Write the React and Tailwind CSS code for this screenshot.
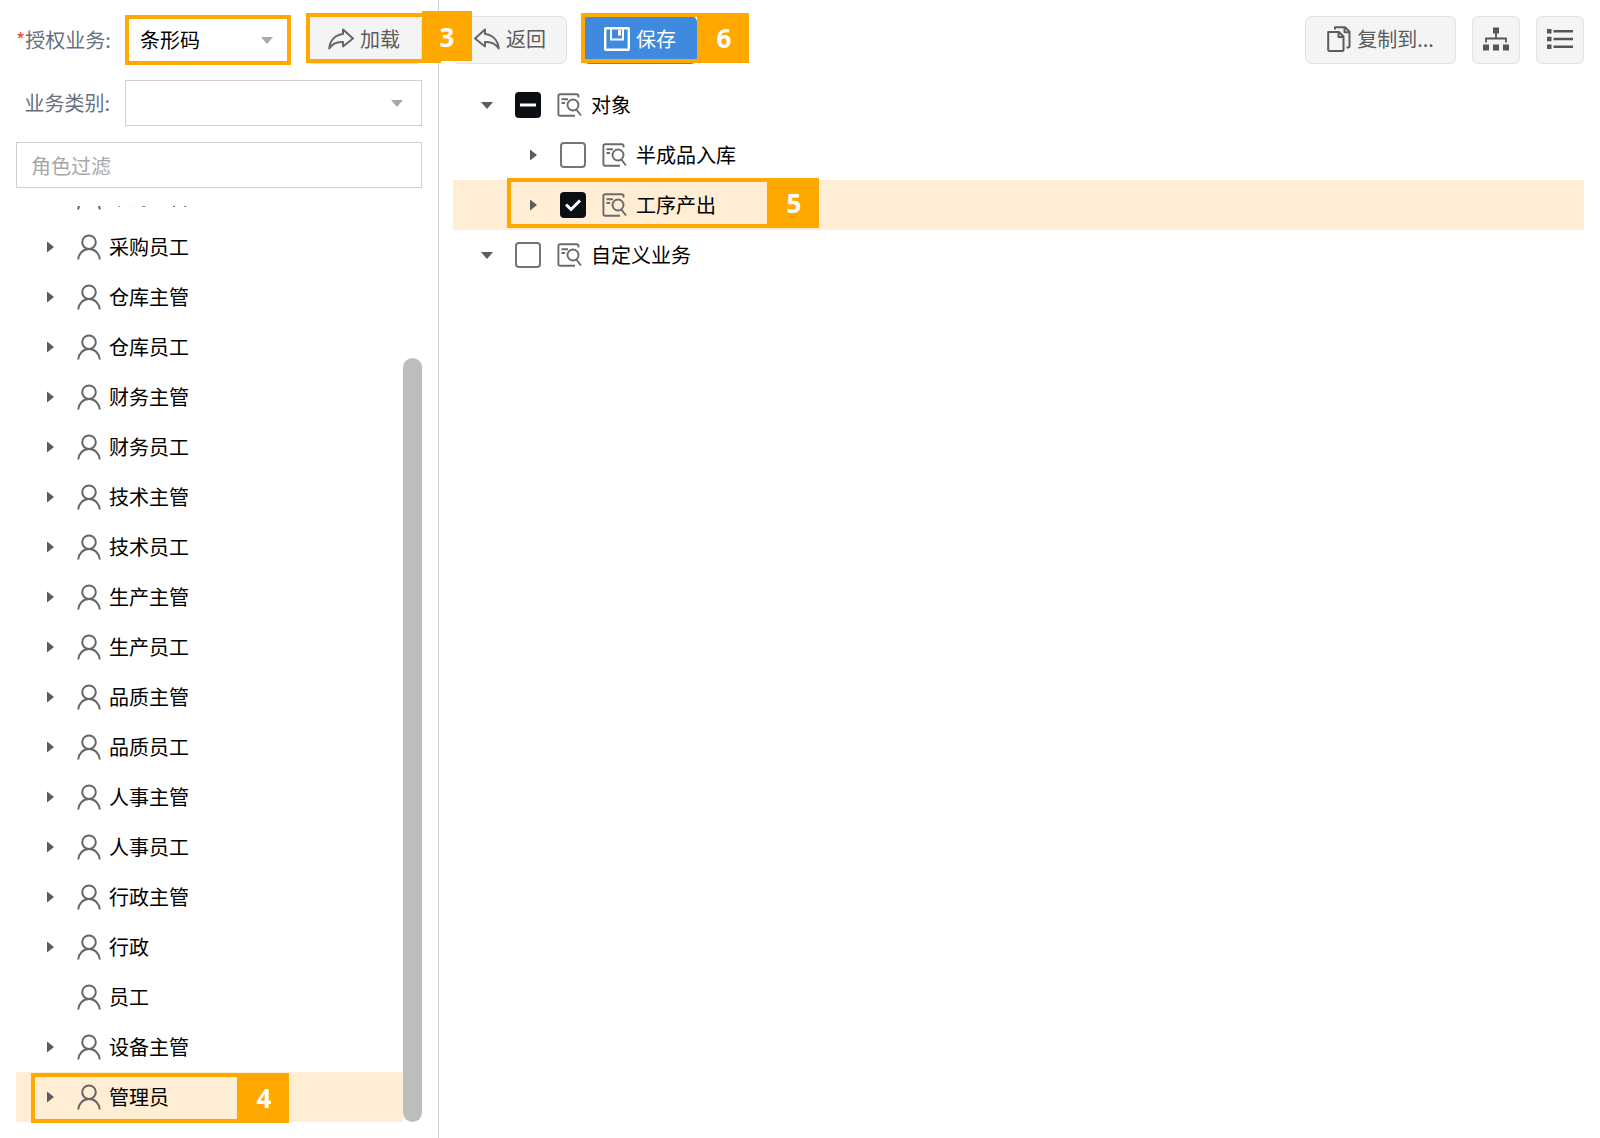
import React, { useEffect, useRef, useState } from "react";

const roles = [
  { name: "采购主管", hasChildren: true },
  { name: "采购员工", hasChildren: true },
  { name: "仓库主管", hasChildren: true },
  { name: "仓库员工", hasChildren: true },
  { name: "财务主管", hasChildren: true },
  { name: "财务员工", hasChildren: true },
  { name: "技术主管", hasChildren: true },
  { name: "技术员工", hasChildren: true },
  { name: "生产主管", hasChildren: true },
  { name: "生产员工", hasChildren: true },
  { name: "品质主管", hasChildren: true },
  { name: "品质员工", hasChildren: true },
  { name: "人事主管", hasChildren: true },
  { name: "人事员工", hasChildren: true },
  { name: "行政主管", hasChildren: true },
  { name: "行政", hasChildren: true },
  { name: "员工", hasChildren: false },
  { name: "设备主管", hasChildren: true },
  { name: "管理员", hasChildren: true },
];

const objects = [
  { name: "对象", level: 0, open: true, state: "mixed" },
  { name: "半成品入库", level: 1, open: false, state: "off" },
  { name: "工序产出", level: 1, open: false, state: "on", step: "5" },
  { name: "自定义业务", level: 0, open: true, state: "off" },
];

const ArrowRight = () => (
  <svg width="7" height="12" viewBox="0 0 7 12" fill="#5c5c5c">
    <path d="M0 0.5 7 6 0 11.5z" />
  </svg>
);

const ArrowDown = ({ className = "text-[#5c5c5c]" }) => (
  <svg className={className} width="12" height="7" viewBox="0 0 12 7" fill="currentColor">
    <path d="M0 0h12L6 7z" />
  </svg>
);

const UserIcon = () => (
  <svg width="24" height="26" viewBox="0 0 24 26" fill="none" stroke="#666" strokeWidth="2">
    <circle cx="12" cy="8.2" r="6.8" />
    <path d="M1.200 25.500C1.800 19.500 6 15 12 15s10.200 4.500 10.800 10.500" />
  </svg>
);

const ObjectIcon = () => (
  <svg width="25" height="24" viewBox="0 0 25 24" fill="none" stroke="#6b6b6b" strokeWidth="1.9">
    <path d="M21.500 4.500V3Q21.500 1.200 19.700 1.200H3.200Q1.400 1.200 1.400 3v18q0 1.800 1.800 1.800H18" />
    <path d="M4.500 6.200h6.500M4.500 10h3.500" />
    <circle cx="16" cy="12" r="5.500" />
    <path d="M19.300 16.500l4.700 6" />
  </svg>
);

const ForwardIcon = () => (
  <svg width="26" height="22" viewBox="0 0 26 22" fill="none" stroke="#666" strokeWidth="2" strokeLinejoin="round">
    <path d="M15 1.500 25 10.500 15 18.500v-4.500C9 13.500 4.500 15.500 1.200 20.500 2 12.500 7 7 15 6z" />
  </svg>
);

const BackIcon = () => (
  <svg width="26" height="22" viewBox="0 0 26 22" fill="none" stroke="#666" strokeWidth="2" strokeLinejoin="round">
    <path d="M11 1.500 1 10.500 11 18.500v-4.500c6-.5 10.500 1.500 13.800 6.500C24 12.500 19 7 11 6z" />
  </svg>
);

const SaveIcon = () => (
  <svg width="26" height="24" viewBox="0 0 26 24" fill="none" stroke="#fff" strokeWidth="2.4">
    <rect x="1.200" y="1.200" width="23.600" height="21.600" rx="0.500" />
    <path d="M7 1.200v11.300h12V1.200" strokeWidth="2" />
    <path d="M15.500 3v5.500" strokeWidth="3" />
  </svg>
);

const CopyIcon = () => (
  <svg width="24" height="26" viewBox="0 0 24 26" fill="none" stroke="#5c5c5c" strokeWidth="2" strokeLinejoin="round">
    <path d="M1.200 6h10.800L16.500 10.500V23.500Q16.500 25 15 25h-12.300Q1.200 25 1.200 23.500z" />
    <path d="M11.500 6v5h5" />
    <path d="M8 3.500V1.200h10l4.500 4.500V20q0 1.500-1.500 1.500h-1.500" />
    <path d="M17.500 1.200v5h5" />
  </svg>
);

const SitemapIcon = () => (
  <svg width="26" height="24" viewBox="0 0 26 24" fill="#555">
    <path d="M10 0.500h6v6h-6zM0 17.500h6v6H0zM10 17.500h6v6h-6zM20 17.500h6v6h-6z" />
    <path d="M13 6v5M3 15.500V11.500h20v4" fill="none" stroke="#555" strokeWidth="1.800" />
  </svg>
);

const ListIcon = () => (
  <svg width="26" height="20" viewBox="0 0 26 20" fill="#555">
    <path d="M0 0h4.500v4.500H0zM0 7.700h4.500v4.500H0zM0 15.500h4.500V20H0z" />
    <path d="M6.500 2.300H26M6.500 10H26M6.500 17.700H26" stroke="#555" strokeWidth="2.400" />
  </svg>
);

const Badge = ({ children, className = "" }) => (
  <span
    className={`flex items-center justify-center bg-[#ffa800] font-['Open_Sans',sans-serif] text-[26px] font-bold text-white ${className}`}
  >
    {children}
  </span>
);

// Orange frame laid over a control, with an optional step number at its right end
const Callout = ({ step, className }) => (
  <div className={`pointer-events-none absolute z-20 flex justify-end border-4 border-[#ffa800] ${className}`}>
    {step && <Badge className="w-12 pl-[6px]">{step}</Badge>}
  </div>
);

const ToolButton = ({ children, className = "", ...rest }) => (
  <button
    type="button"
    className={`flex h-12 items-center justify-center gap-[6px] rounded-md border border-[#e2e2e2] bg-[#f4f4f4] pb-[2px] text-[#5c5c5c] ${className}`}
    {...rest}
  >
    {children}
  </button>
);

const CheckBox = ({ id, state }) => {
  const ref = useRef(null);
  const [value, setValue] = useState(state);

  useEffect(() => {
    ref.current.indeterminate = value === "mixed";
  }, [value]);

  return (
    <span className="relative flex size-[26px]">
      <input
        ref={ref}
        id={id}
        type="checkbox"
        checked={value === "on"}
        onChange={(e) => setValue(e.target.checked ? "on" : "off")}
        className="size-[26px] appearance-none rounded border-2 border-[#757575] bg-white checked:border-[#0b0f14] checked:bg-[#0b0f14] indeterminate:border-[#0b0f14] indeterminate:bg-[#0b0f14]"
      />
      {value !== "off" && (
        <svg
          className="pointer-events-none absolute inset-0"
          width="26"
          height="26"
          viewBox="0 0 26 26"
          fill="none"
          stroke="#fff"
          strokeWidth="3"
        >
          <path d={value === "on" ? "M6 12.500l5 5L20 8.500" : "M5 13h16"} />
        </svg>
      )}
    </span>
  );
};

const RolePanel = () => {
  const [selected, setSelected] = useState("管理员");
  const [filter, setFilter] = useState("");

  return (
    <aside className="flex w-[439px] shrink-0 flex-col gap-4 border-r border-[#cfcfcf] p-4">
      <div className="flex h-12 items-center">
        <label htmlFor="business" className="w-[94px] shrink-0 text-right whitespace-nowrap text-[#66707f]">
          <span className="text-[#f0502d]">*</span>授权业务:
        </label>
        <div className="relative ml-[15px] flex h-12 w-[166px] items-center">
          <select
            id="business"
            className="h-full w-full appearance-none border border-[#d4d4d4] bg-white pr-8 pl-[14px] text-black"
          >
            <option>条形码</option>
          </select>
          <ArrowDown className="pointer-events-none absolute right-[18px] text-[#a9a9a9]" />
          <Callout className="inset-x-0 -inset-y-px" />
        </div>
        <div className="relative ml-[15px] flex-1">
          <ToolButton className="w-full">
            <ForwardIcon />
            加载
          </ToolButton>
          <Callout className="-top-[3px] -right-[19px] left-0 h-[50px]" />
          <Badge className="absolute -top-[5px] left-full z-20 h-[50px] w-[50px] pt-px">3</Badge>
        </div>
      </div>

      <div className="flex h-[46px] items-center">
        <label htmlFor="category" className="w-[94px] shrink-0 text-right whitespace-nowrap text-[#66707f]">
          业务类别:
        </label>
        <div className="relative ml-[15px] flex h-full flex-1 items-center">
          <select
            id="category"
            className="h-full w-full appearance-none border border-[#cfcfcf] bg-white pr-8 pl-[14px] text-black"
          >
            <option></option>
          </select>
          <ArrowDown className="pointer-events-none absolute right-[19px] text-[#a9a9a9]" />
        </div>
      </div>

      <input
        type="text"
        aria-label="角色过滤"
        placeholder="角色过滤"
        value={filter}
        onChange={(e) => setFilter(e.target.value)}
        className="h-[46px] w-full shrink-0 border border-[#cfcfcf] px-[14px] placeholder:text-[#a8a8a8]"
      />

      <div className="flex min-h-0 flex-1">
        {/* list is scrolled to its end */}
        <div className="flex flex-1 flex-col justify-end [clip-path:inset(2px_0_-1px_0)]">
          {roles
            .filter((role) => role.name.includes(filter))
            .map((role) => (
              <button
                key={role.name}
                type="button"
                onClick={() => setSelected(role.name)}
                className={`relative flex h-[50px] shrink-0 items-center pl-[31px] text-black ${
                  role.name === selected ? "bg-[#ffedd4]" : ""
                }`}
              >
                <span className="flex w-[30px] shrink-0">{role.hasChildren && <ArrowRight />}</span>
                <UserIcon />
                <span className="ml-2">{role.name}</span>
                {role.name === "管理员" && <Callout step="4" className="top-px left-[15px] h-[50px] w-[258px]" />}
              </button>
            ))}
        </div>
        <div className="flex w-[19px] items-end">
          <div className="h-[83.2%] w-full rounded-full bg-[#bdbdbd]"></div>
        </div>
      </div>
    </aside>
  );
};

const ObjectPanel = () => (
  <main className="flex min-w-0 flex-1 flex-col gap-4 py-4 pr-4 pl-[14px]">
    <div className="flex items-center justify-between">
      <div className="flex gap-4">
        <ToolButton className="w-[114px]">
          <BackIcon />
          返回
        </ToolButton>
        <div className="relative">
          <button
            type="button"
            className="flex h-12 w-[114px] items-center justify-center gap-[6px] rounded-md bg-[#3f89de] pb-[2px] text-white"
          >
            <SaveIcon />
            保存
          </button>
          <Callout step="6" className="-top-[3px] -left-[2px] h-[50px] w-[168px]" />
        </div>
      </div>
      <div className="flex gap-4">
        <ToolButton className="w-[151px]">
          <CopyIcon />
          复制到...
        </ToolButton>
        <ToolButton className="w-12" aria-label="树形">
          <SitemapIcon />
        </ToolButton>
        <ToolButton className="w-12" aria-label="列表">
          <ListIcon />
        </ToolButton>
      </div>
    </div>

    <div>
      {objects.map((item, i) => (
        <div
          key={item.name}
          className={`relative flex h-[50px] items-center text-black ${item.level === 1 ? "pl-[73px]" : "pl-7"} ${
            item.step ? "bg-[#ffedd4]" : ""
          }`}
        >
          <span className="flex w-[34px] shrink-0">
            {item.open ? (
              <ArrowDown />
            ) : (
              <span className="pl-1">
                <ArrowRight />
              </span>
            )}
          </span>
          <CheckBox id={`object-${i}`} state={item.state} />
          <label htmlFor={`object-${i}`} className="ml-4 flex items-center gap-[9px]">
            <ObjectIcon />
            {item.name}
          </label>
          {item.step && <Callout step={item.step} className="-top-[2px] left-[54px] h-[50px] w-[312px]" />}
        </div>
      ))}
    </div>
  </main>
);

const App = () => {
  return (
    <div className="flex h-screen bg-white font-['Noto_Sans_CJK_SC',sans-serif] text-[20px] leading-7">
      <RolePanel />
      <ObjectPanel />
    </div>
  );
};

export default App;
